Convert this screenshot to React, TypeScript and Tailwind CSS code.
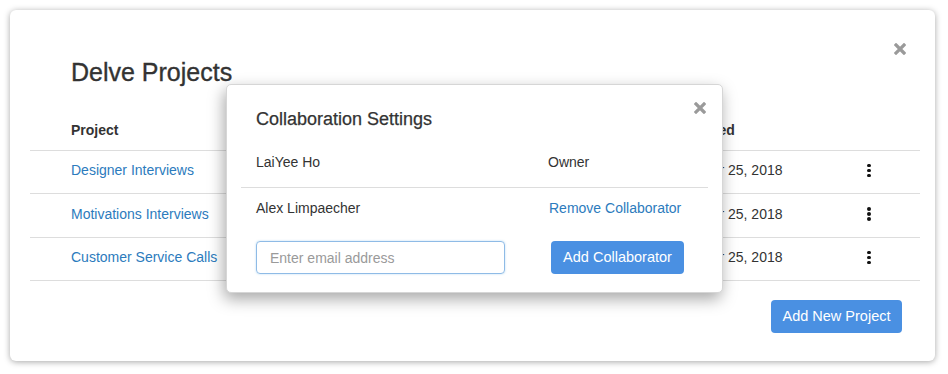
import React from "react";

const CloseX = ({ size = 12 }: { size?: number }) => (
  <svg width={size} height={size} viewBox="0 0 12 12">
    <path d="M2 2 L10 10 M10 2 L2 10" stroke="#9a9a9a" strokeWidth="3.2" strokeLinecap="square" />
  </svg>
);

const Kebab = () => (
  <div className="flex flex-col items-center gap-[1.5px]">
    <span className="block w-[3.5px] h-[3.5px] rounded-full bg-[#111]" />
    <span className="block w-[3.5px] h-[3.5px] rounded-full bg-[#111]" />
    <span className="block w-[3.5px] h-[3.5px] rounded-full bg-[#111]" />
  </div>
);

const rows = [
  { name: "Designer Interviews", h: "h-[43px] border-t" },
  { name: "Motivations Interviews", h: "h-[44px] border-t" },
  { name: "Customer Service Calls", h: "h-[44px] border-y" },
];

export default function App() {
  return (
    <div className="w-[948px] h-[374px] bg-white pt-[10px] pl-[10px] font-['Liberation_Sans',Arial,sans-serif] text-[#333] text-[14px]">
      <div className="relative w-[925px] h-[351px] bg-white rounded-[6px] shadow-[0_1px_6px_rgba(0,0,0,0.35)] pt-[47px]">
        <button className="absolute right-[25px] top-[29px] p-1">
          <CloseX />
        </button>
        <h1 className="pl-[61px] text-[25px] leading-[30px] [-webkit-text-stroke:0.35px_#333]">Delve Projects</h1>
        <div className="mt-[23px] ml-[20px] w-[890px]">
          <div className="h-[40px] flex items-center font-bold">
            <div className="pl-[41px] w-[662px]">Project</div>
            <div>Edited</div>
          </div>
          {rows.map((r) => (
            <div key={r.name} className={`flex items-center pb-[3px] border-[#dddddd] ${r.h}`}>
              <div className="pl-[41px] w-[670px] text-[#2c7bbd]">{r.name}</div>
              <div className="w-[167px]">Mar 25, 2018</div>
              <Kebab />
            </div>
          ))}
        </div>
        <div className="flex justify-end pr-[33px] mt-[19px]">
          <button className="h-[33px] w-[131px] rounded-[4px] bg-[#4a90e2] text-white text-[14.5px] pt-[1px]">Add New Project</button>
        </div>

        <div className="absolute left-[216px] top-[74px] w-[497px] h-[209px] bg-white rounded-[5px] border border-[#d6d6d6] shadow-[-2px_6px_16px_rgba(0,0,0,0.35)] pt-[22px] px-[14px]">
          <button className="absolute right-[15px] top-[16px] p-[1px]">
            <CloseX size={12} />
          </button>
          <h2 className="pl-[15px] text-[18px] leading-[24px] [-webkit-text-stroke:0.25px_#333]">Collaboration Settings</h2>
          <div className="mt-[7px] h-[50px] border-b border-[#dddddd] flex items-center px-[15px]">
            <div className="w-[292px]">LaiYee Ho</div>
            <div>Owner</div>
          </div>
          <div className="h-[40px] flex items-center px-[15px]">
            <div className="w-[293px]">Alex Limpaecher</div>
            <div className="text-[#2c7bbd]">Remove Collaborator</div>
          </div>
          <div className="mt-[13px] flex items-center px-[15px]">
            <input
              className="w-[249px] h-[33px] rounded-[4px] border border-[#8fbbe6] shadow-[0_0_2px_rgba(102,175,233,0.5)] px-[13px] text-[14px] outline-none placeholder:text-[#9a9a9a]"
              placeholder="Enter email address"
            />
            <button className="ml-[46px] h-[33px] w-[133px] rounded-[4px] bg-[#4a90e2] text-white text-[14.5px]">Add Collaborator</button>
          </div>
        </div>
      </div>
    </div>
  );
}
